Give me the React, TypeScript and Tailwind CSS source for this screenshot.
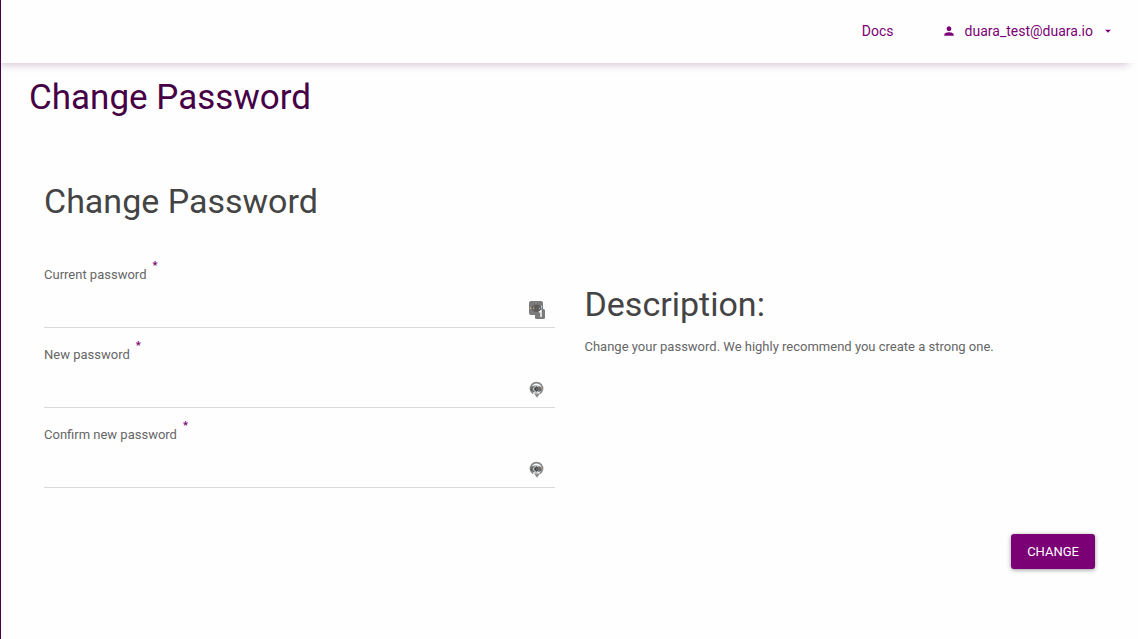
import React from "react";

function PersonIcon() {
  return (
    <svg viewBox="0 0 24 24" className="size-[14px]" fill="currentColor" aria-hidden="true">
      <path d="M12 12c2.21 0 4-1.79 4-4s-1.79-4-4-4-4 1.79-4 4 1.79 4 4 4zm0 2c-2.67 0-8 1.34-8 4v2h16v-2c0-2.66-5.33-4-8-4z" />
    </svg>
  );
}

function CaretIcon() {
  return (
    <svg viewBox="0 0 24 24" className="size-[14px]" fill="currentColor" aria-hidden="true">
      <path d="M7 10l5 5 5-5z" />
    </svg>
  );
}

function SavedLoginIcon() {
  return (
    <svg viewBox="0 0 18 20" className="h-5 w-[18px]" aria-hidden="true">
      <rect x="1" y="1" width="14" height="14" rx="2" fill="#7b7b7b" />
      <rect x="7" y="9" width="10" height="10" rx="1.5" fill="#7b7b7b" />
      <ellipse cx="8.5" cy="8.2" rx="4.5" ry="3" fill="#6d6a68" stroke="#565351" strokeWidth="1" />
      <circle cx="8.5" cy="8.2" r="1.5" fill="none" stroke="#4b4948" strokeWidth="1" />
      <circle cx="2.6" cy="8.2" r=".8" fill="#e5c69d" />
      <circle cx="5.6" cy="8.2" r=".7" fill="#d9a878" />
      <circle cx="11.6" cy="8.6" r=".7" fill="#8fb8d8" />
      <path d="M13.4 5.5v3" fill="none" stroke="#b9d9ee" strokeWidth="1" />
      <path d="M11 12.3l2-1.6v6.3" fill="none" stroke="#fff" strokeWidth="1.4" />
    </svg>
  );
}

function GenerateIcon() {
  return (
    <svg viewBox="0 0 18 20" className="h-5 w-[18px]" aria-hidden="true">
      <path d="M5.2 13.6A6 6 0 1 1 11.8 13.6" fill="none" stroke="#8a8a8a" strokeWidth="1.7" />
      <path d="M6 13.6h6L9 17.8z" fill="#8a8a8a" />
      <ellipse cx="8" cy="9" rx="5.8" ry="3.6" fill="#6d6864" />
      <path d="M10.8 7.2a3 3 0 1 0 0 3.6" fill="none" stroke="#b9d6e8" strokeWidth="1" />
      <path d="M9.8 8a1.5 1.5 0 1 0 0 2" fill="none" stroke="#403e3d" strokeWidth="1" />
    </svg>
  );
}

const fields = [
  { id: "current-password", label: "Current password", icon: <SavedLoginIcon />, complete: "current-password" },
  { id: "new-password", label: "New password", icon: <GenerateIcon />, complete: "new-password" },
  { id: "confirm-password", label: "Confirm new password", icon: <GenerateIcon />, complete: "new-password" },
];

export default function App() {
  return (
    <div className="min-h-screen border-l border-[#460046] bg-[#fefefe] font-['Roboto',sans-serif] text-[#666]">
      <header className="flex h-[63px] items-center justify-end bg-[#fefefe] pr-[23px] pb-[2px] text-sm text-[#7b0075] shadow-[-6px_6px_8px_-4px_rgba(70,0,70,0.22)]">
        <a href="#docs" className="mr-12">Docs</a>
        <button type="button" className="flex items-center">
          <PersonIcon />
          <span className="mr-2 ml-[9px]">duara_test@duara.io</span>
          <CaretIcon />
        </button>
      </header>
      <main className="pt-[13px]">
        <h1 className="pl-7 text-[35px] leading-[44px] text-[#460046]">Change Password</h1>
        <form className="pt-[59px] pr-[43px] pl-[43px]" onSubmit={(e) => e.preventDefault()}>
          <h2 className="text-[34px] leading-[44px] text-[#444]">Change Password</h2>
          <div className="mt-6 grid grid-cols-2 gap-[30px]">
            <div>
              {fields.map((field) => (
                <div key={field.id} className="h-20 pt-[18px]">
                  <label htmlFor={field.id} className="flex h-5 gap-[6px] text-[13px] leading-5">
                    {field.label}
                    <span className="-mt-[9px] text-[11px] font-bold text-[#7b0075]">*</span>
                  </label>
                  <div className="flex h-[43px] items-center border-b border-[#d9d9d9] pt-2 pr-[9px]">
                    <input
                      id={field.id}
                      type="password"
                      autoComplete={field.complete}
                      required
                      className="h-full min-w-0 flex-1 bg-transparent text-sm outline-none"
                    />
                    {field.icon}
                  </div>
                </div>
              ))}
            </div>
            <section className="pt-[35px]">
              <h2 className="text-[34px] leading-[44px] text-[#444]">Description:</h2>
              <p className="mt-[11px] text-[13px] leading-5">
                Change your password. We highly recommend you create a strong one.
              </p>
            </section>
          </div>
          <div className="mt-[47px] flex justify-end">
            <button
              type="submit"
              className="h-[35px] rounded-[3px] bg-[#7b0075] px-4 text-[13px] text-white shadow-[0_1px_4px_rgba(0,0,0,0.4)]"
            >
              CHANGE
            </button>
          </div>
        </form>
      </main>
    </div>
  );
}
